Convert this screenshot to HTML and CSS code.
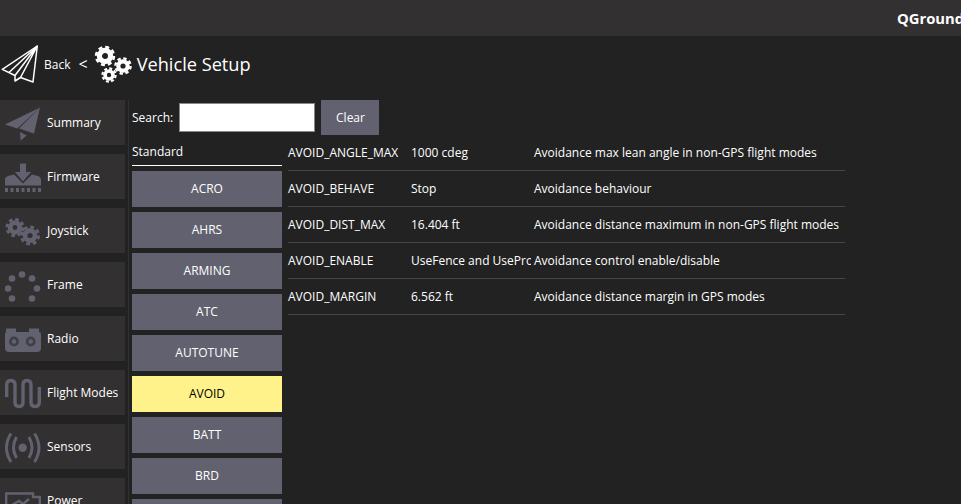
FILE: index.html
```html
<!DOCTYPE html>
<html lang="en">

<head>
  <meta charset="UTF-8">
  <title>Vehicle Setup</title>
  <link rel="stylesheet" href="styles.css">
</head>

<body>
  <div class="topbar"><span class="app-name">QGroundControl</span></div>

  <div class="header">
    <svg class="logo" viewBox="0 0 38 38" fill="none" stroke="#fff" stroke-width="1.5" stroke-linejoin="round">
      <path d="M36.3 1 L1.3 24.3 L14 30.5 L14 36 L19.5 32.5 L32 37 Z" />
      <path d="M36.3 1 L14 30.5 M36.3 1 L19.5 32.5 M36.3 1 L8 27.5" />
    </svg>
    <span class="back">Back</span>
    <span class="chevron">&lt;</span>
    <svg class="gears" viewBox="0 0 38 38" fill="none" stroke="#fff">
      <circle cx="11" cy="11" r="5.6" stroke-width="5.2" />
      <circle cx="11" cy="11" r="9" stroke-width="2.4" stroke-dasharray="4 3.07" />
      <circle cx="29" cy="21" r="4.7" stroke-width="4.2" />
      <circle cx="29" cy="21" r="7.6" stroke-width="2.4" stroke-dasharray="3.4 2.57" />
      <circle cx="15" cy="30" r="4" stroke-width="3.6" />
      <circle cx="15" cy="30" r="6.6" stroke-width="2.2" stroke-dasharray="3 2.18" />
    </svg>
    <span class="page-title">Vehicle Setup</span>
  </div>

  <div class="main">
    <div class="sidebar">
      <div class="side-item">
        <svg class="side-icon" viewBox="0 0 36 36" fill="#62616f">
          <path d="M35 2.5 L0 19.5 L12.3 23.5 Z" />
          <path d="M35 2.5 L14 23.5 L29 28.5 Z" />
          <path d="M15 27 L21.7 30.5 L15.7 35.5 Z" />
        </svg>
        <span>Summary</span>
      </div>
      <div class="side-item">
        <svg class="side-icon" viewBox="0 0 36 36" fill="#62616f">
          <path d="M15 4.5 H21 V13 H26 L18 22.5 L10 13 H15 Z" />
          <path d="M0 26.5 V21 Q0 18 3 17 L9 15.5 L18 24.5 L27 15.5 L33 17 Q36 18 36 21 V26.5 Z" />
          <path d="M0 29 H3 V33 H0 Z M5.5 29 H8.5 V33 H5.5 Z M11 29 H14 V33 H11 Z M16.5 29 H19.5 V33 H16.5 Z M22 29 H25 V33 H22 Z M27.5 29 H30.5 V33 H27.5 Z M33 29 H36 V33 H33 Z" />
        </svg>
        <span>Firmware</span>
      </div>
      <div class="side-item">
        <svg class="side-icon" viewBox="0 0 36 36" fill="none" stroke="#62616f">
          <circle cx="10" cy="14.5" r="4.8" stroke-width="4.8" />
          <circle cx="10" cy="14.5" r="8.2" stroke-width="2.8" stroke-dasharray="3.6 2.84" />
          <circle cx="25" cy="22.5" r="5" stroke-width="4.8" />
          <circle cx="25" cy="22.5" r="8.6" stroke-width="3" stroke-dasharray="3.8 2.95" />
        </svg>
        <span>Joystick</span>
      </div>
      <div class="side-item">
        <svg class="side-icon" viewBox="0 0 36 36" fill="#62616f">
          <circle cx="17" cy="7.5" r="3.3" />
          <circle cx="7" cy="11.5" r="3.3" />
          <circle cx="27" cy="11.5" r="3.3" />
          <circle cx="3" cy="21.5" r="3.3" />
          <circle cx="32" cy="21.5" r="3.3" />
          <circle cx="7" cy="31.5" r="3.3" />
          <circle cx="27" cy="31.5" r="3.3" />
        </svg>
        <span>Frame</span>
      </div>
      <div class="side-item">
        <svg class="side-icon" viewBox="0 0 36 36" fill="#62616f">
          <path d="M1 7.5 H11 V11 H1 Z M24 7.5 H34 V11 H24 Z" />
          <path d="M2 11 H34 Q36 11 36 13 V27 Q36 31 32 31 H4 Q0 31 0 27 V13 Q0 11 2 11 Z" />
          <circle cx="9" cy="20.5" r="3.6" fill="none" stroke="#403f47" stroke-width="2.6" />
          <circle cx="25.7" cy="20.5" r="3.6" fill="none" stroke="#403f47" stroke-width="2.6" />
        </svg>
        <span>Radio</span>
      </div>
      <div class="side-item">
        <svg class="side-icon" viewBox="0 0 36 36" fill="none" stroke="#62616f" stroke-width="3.4">
          <path d="M1.7 22 V10 Q1.7 5.5 5.8 5.5 Q10 5.5 10 10 V27 Q10 31.5 14 31.5 Q18 31.5 18 27 V10 Q18 5.5 22 5.5 Q26 5.5 26 10 V27 Q26 31.5 30 31.5 Q34.3 31.5 34.3 27 V12" />
        </svg>
        <span>Flight Modes</span>
      </div>
      <div class="side-item">
        <svg class="side-icon" viewBox="0 0 36 36" fill="none" stroke="#62616f" stroke-width="3">
          <circle cx="17.7" cy="18.8" r="4.2" fill="#62616f" stroke="none" />
          <path d="M11.5 8 Q5.5 18.8 11.5 29 M24 8 Q30 18.8 24 29" />
          <path d="M6 4.5 Q-3 18.8 6 33 M29.5 4.5 Q38.5 18.8 29.5 33" />
        </svg>
        <span>Sensors</span>
      </div>
      <div class="side-item">
        <svg class="side-icon" viewBox="0 0 36 36" fill="none" stroke="#62616f" stroke-width="2.4">
          <path d="M1.2 10.5 H28 V14 H34.8 V36 H1.2 Z" />
          <path d="M7 22 L14 18 L18 21 L24 16" />
        </svg>
        <span>Power</span>
      </div>
    </div>

    <div class="divider"></div>

    <div class="content">
      <div class="search-row">
        <label class="search-label" for="search">Search:</label>
        <input class="search-input" id="search">
        <button class="clear-btn">Clear</button>
      </div>

      <div class="params">
        <div class="groups">
          <div class="group-title">Standard</div>
          <div class="group-btn">ACRO</div>
          <div class="group-btn">AHRS</div>
          <div class="group-btn">ARMING</div>
          <div class="group-btn">ATC</div>
          <div class="group-btn">AUTOTUNE</div>
          <div class="group-btn active">AVOID</div>
          <div class="group-btn">BATT</div>
          <div class="group-btn">BRD</div>
          <div class="group-btn"></div>
        </div>

        <div class="table">
          <div class="row">
            <span class="col-name">AVOID_ANGLE_MAX</span>
            <span class="col-value">1000 cdeg</span>
            <span class="col-desc">Avoidance max lean angle in non-GPS flight modes</span>
          </div>
          <div class="row">
            <span class="col-name">AVOID_BEHAVE</span>
            <span class="col-value">Stop</span>
            <span class="col-desc">Avoidance behaviour</span>
          </div>
          <div class="row">
            <span class="col-name">AVOID_DIST_MAX</span>
            <span class="col-value">16.404 ft</span>
            <span class="col-desc">Avoidance distance maximum in non-GPS flight modes</span>
          </div>
          <div class="row">
            <span class="col-name">AVOID_ENABLE</span>
            <span class="col-value">UseFence and UseProximitySensor</span>
            <span class="col-desc">Avoidance control enable/disable</span>
          </div>
          <div class="row">
            <span class="col-name">AVOID_MARGIN</span>
            <span class="col-value">6.562 ft</span>
            <span class="col-desc">Avoidance distance margin in GPS modes</span>
          </div>
        </div>
      </div>
    </div>
  </div>
</body>

</html>
```

FILE: styles.css
```css
html,
body {
  height: 100%;
}

body {
  margin: 0;
  overflow: hidden;
  background-color: #222222;
  color: #ffffff;
  font-family: "Open Sans", sans-serif;
  font-size: 12px;
}

.topbar {
  height: 36px;
  background-color: #333031;
  display: flex;
  align-items: center;
  padding-left: 897px;
  white-space: nowrap;
  overflow: hidden;
}

.app-name {
  font-weight: 700;
  font-size: 14.8px;
}

.header {
  height: 64px;
  box-sizing: border-box;
  padding-bottom: 8px;
  display: flex;
  align-items: center;
}

.logo {
  width: 38px;
  height: 38px;
  margin-left: 1px;
}

.back {
  margin-left: 5px;
}

.chevron {
  margin-left: 8px;
  font-size: 16px;
}

.gears {
  width: 38px;
  height: 38px;
  margin-left: 6px;
}

.page-title {
  margin-left: 5px;
  font-size: 18.2px;
}

.main {
  display: flex;
}

.sidebar {
  width: 125px;
  display: flex;
  flex-direction: column;
  gap: 9px;
}

.side-item {
  height: 45px;
  flex: none;
  background-color: #333031;
  display: flex;
  align-items: center;
  padding-left: 5px;
  gap: 6px;
}

.side-icon {
  width: 36px;
  height: 36px;
  flex: none;
}

.divider {
  width: 1px;
  height: 404px;
  margin-left: 3px;
  background-color: #333031;
}

.content {
  margin-left: 3px;
  flex: 1;
}

.search-row {
  height: 35px;
  display: flex;
  align-items: center;
}

.search-label {
  width: 47px;
}

.search-input {
  width: 136px;
  height: 29px;
  box-sizing: border-box;
  background-color: #ffffff;
  border: 1px solid #888888;
  padding: 0;
}

.clear-btn {
  width: 58px;
  height: 35px;
  margin-left: 6px;
  padding: 0 0 0 1px;
  background-color: #62616f;
  color: #ffffff;
  border: none;
  font-family: inherit;
  font-size: 12px;
}

.params {
  display: flex;
}

.groups {
  width: 150px;
  flex: none;
  display: flex;
  flex-direction: column;
  gap: 5px;
}

.group-title {
  height: 31px;
  line-height: 33px;
  box-sizing: border-box;
  border-bottom: 1px solid #ffffff;
}

.group-btn {
  height: 36px;
  flex: none;
  box-sizing: border-box;
  padding-bottom: 2px;
  background-color: #62616f;
  display: flex;
  align-items: center;
  justify-content: center;
}

.group-btn.active {
  background-color: #fff28b;
  color: #000000;
}

.table {
  margin-left: 6px;
  width: 557px;
}

.row {
  height: 36px;
  box-sizing: border-box;
  border-bottom: 1px solid #464646;
  display: flex;
  align-items: center;
  white-space: nowrap;
}

.col-name {
  width: 123px;
  flex: none;
}

.col-value {
  width: 120px;
  margin-right: 3px;
  flex: none;
  overflow: hidden;
}

.col-desc {
  flex: none;
}
```
